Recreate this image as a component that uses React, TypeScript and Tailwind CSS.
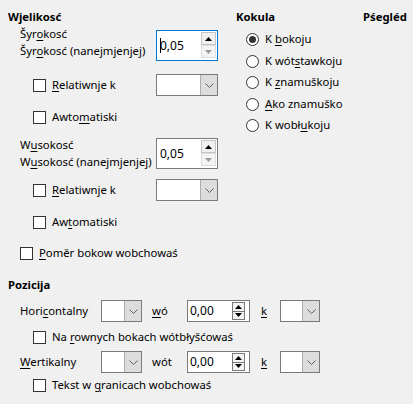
import React from "react";

const U = ({ children }: { children: React.ReactNode }) => (
  <span className="underline underline-offset-[2px] decoration-1">{children}</span>
);

const Check = () => (
  <span className="inline-block w-[13px] h-[13px] border border-[#333333] bg-white shrink-0" />
);

const Radio = ({ sel }: { sel?: boolean }) => (
  <span className="w-[13px] h-[13px] rounded-full border border-[#333333] bg-white flex items-center justify-center shrink-0">
    {sel && <span className="w-[7px] h-[7px] rounded-full bg-[#333333]" />}
  </span>
);

const Chevron = () => (
  <svg width="9" height="5" viewBox="0 0 9 5">
    <polyline points="0.5,0.5 4.5,4.5 8.5,0.5" fill="none" stroke="#606060" strokeWidth="1" />
  </svg>
);

const Drop = ({ w }: { w: string }) => (
  <div className={`flex h-[22px] ${w} border border-[#7a7a7a] bg-white shrink-0`}>
    <div className="flex-1" />
    <div className="w-[17px] bg-[#dcdcdc] border-l border-[#adadad] flex items-center justify-center">
      <Chevron />
    </div>
  </div>
);

const Tri = ({ up, color }: { up?: boolean; color: string }) => (
  <svg width="7" height="4" viewBox="0 0 7 4">
    <polygon points={up ? "0,4 7,4 3.5,0" : "0,0 7,0 3.5,4"} fill={color} />
  </svg>
);

const TallSpin = ({ focus, value }: { focus?: boolean; value: string }) => (
  <div
    className={`relative flex h-[31px] w-[62px] bg-white border ${focus ? "border-[#0078d7]" : "border-[#7a7a7a]"} shrink-0`}
  >
    <div className="flex-1 flex items-center pl-[3px] relative text-[12px]">
      {value}
      {focus && <span className="absolute left-[3px] top-[7px] w-px h-[15px] bg-black" />}
    </div>
    <div className="flex flex-col gap-0 mr-[1px] mt-[1px]">
      <div className="w-[15px] h-[13px] bg-[#f0f0f0] border border-[#c4c4c4] flex items-center justify-center">
        <Tri up color="#000000" />
      </div>
      <div className="w-[15px] h-[13px] bg-[#f4f4f4] border border-[#dddddd] flex items-center justify-center">
        <Tri color="#9a9a9a" />
      </div>
    </div>
  </div>
);

const SmallSpin = ({ value }: { value: string }) => (
  <div className="flex h-[22px] w-[63px] bg-white border border-[#7a7a7a] shrink-0">
    <div className="flex-1 flex items-center pl-[2px] text-[12px]">{value}</div>
    <div className="flex flex-col w-[13px] h-[18px] mt-[1px] mr-[4px] border border-[#7a7a7a] bg-[#f4f4f4]">
      <div className="flex-1 flex items-center justify-center border-b border-[#7a7a7a]">
        <Tri up color="#000000" />
      </div>
      <div className="flex-1 flex items-center justify-center">
        <Tri color="#000000" />
      </div>
    </div>
  </div>
);

const CheckRow = ({ children, pl }: { children: React.ReactNode; pl: string }) => (
  <div className={`flex items-center ${pl}`}>
    <Check />
    <span className="ml-[6px] whitespace-nowrap">{children}</span>
  </div>
);

const RadioRow = ({ children, sel }: { children: React.ReactNode; sel?: boolean }) => (
  <div className="flex items-center h-[21.5px] pl-[10px]">
    <Radio sel={sel} />
    <span className="ml-[6px] whitespace-nowrap">{children}</span>
  </div>
);

export default function App() {
  return (
    <div
      className="w-[413px] h-[404px] bg-[#f0f0f0] text-[11.3px] text-black overflow-hidden"
      style={{ fontFamily: '"Noto Sans", "Open Sans", sans-serif' }}
    >
      <div className="flex pl-2">
        <div className="w-[228px] flex flex-col shrink-0">
          <div className="mt-[9px] h-4 leading-4 font-bold">Wjelikosć</div>
          <div className="flex pl-3">
            <div className="w-[136px] leading-[17px] whitespace-nowrap">
              Šyr<U>o</U>kosć
              <br />
              Šyr<U>o</U>kosć (nanejmjenjej)
            </div>
            <div className="mt-[5px]">
              <TallSpin focus value="0,05" />
            </div>
          </div>
          <div className="flex items-center h-[22px] mt-[13px]">
            <div className="w-[148px]">
              <CheckRow pl="pl-[25px]">
                <U>R</U>elatiwnje k
              </CheckRow>
            </div>
            <Drop w="w-[62px]" />
          </div>
          <div className="flex items-center h-[22px] mt-[10px]">
            <CheckRow pl="pl-[25px]">
              Awto<U>m</U>atiski
            </CheckRow>
          </div>
          <div className="flex pl-3 mt-[8px]">
            <div className="w-[136px] leading-[17px] whitespace-nowrap">
              W<U>u</U>sokosć
              <br />
              W<U>u</U>sokosć (nanejmjenjej)
            </div>
            <div className="mt-[2px]">
              <TallSpin value="0,05" />
            </div>
          </div>
          <div className="flex items-center h-[22px] mt-[9px]">
            <div className="w-[148px]">
              <CheckRow pl="pl-[25px]">
                <U>R</U>elatiwnje k
              </CheckRow>
            </div>
            <Drop w="w-[62px]" />
          </div>
          <div className="flex items-center h-[22px] mt-[10px]">
            <CheckRow pl="pl-[25px]">
              Aw<U>t</U>omatiski
            </CheckRow>
          </div>
          <div className="flex items-center h-[22px] mt-[9px]">
            <CheckRow pl="pl-3">
              <U>P</U>oměr bokow wobchowaś
            </CheckRow>
          </div>
        </div>
        <div className="w-[127px] flex flex-col shrink-0">
          <div className="mt-[9px] h-4 leading-4 font-bold">Kokula</div>
          <div className="mt-[4px] flex flex-col">
            <RadioRow sel>
              K <U>b</U>okoju
            </RadioRow>
            <RadioRow>
              K wót<U>s</U>tawkoju
            </RadioRow>
            <RadioRow>
              K <U>z</U>namuškoju
            </RadioRow>
            <RadioRow>
              <U>A</U>ko znamuško
            </RadioRow>
            <RadioRow>
              K wobł<U>u</U>koju
            </RadioRow>
          </div>
        </div>
        <div className="flex flex-col">
          <div className="mt-[9px] h-4 leading-4 font-bold whitespace-nowrap">Pśegléd</div>
        </div>
      </div>

      <div className="flex flex-col pl-2 mt-[13px]">
        <div className="h-4 leading-4 font-bold">Pozicija</div>
        <div className="flex items-center h-[22px] mt-[7px]">
          <div className="w-[93px] pl-3 whitespace-nowrap">
            Hori<U>c</U>ontalny
          </div>
          <Drop w="w-[41px]" />
          <div className="w-[45px] pl-[10px]">
            <U>w</U>ó
          </div>
          <SmallSpin value="0,00" />
          <div className="w-[30px] pl-[11px]">
            <U>k</U>
          </div>
          <Drop w="w-[40px]" />
        </div>
        <div className="flex items-center h-[22px] mt-[4px]">
          <CheckRow pl="pl-[25px]">
            Na <U>r</U>ownych bokach wótbłyšćowaś
          </CheckRow>
        </div>
        <div className="flex items-center h-[22px] mt-[3px]">
          <div className="w-[93px] pl-3 whitespace-nowrap">
            <U>W</U>ertikalny
          </div>
          <Drop w="w-[41px]" />
          <div className="w-[45px] pl-[10px]">wót</div>
          <SmallSpin value="0,00" />
          <div className="w-[30px] pl-[11px]">
            <U>k</U>
          </div>
          <Drop w="w-[40px]" />
        </div>
        <div className="flex items-center h-[22px] mt-[1px]">
          <CheckRow pl="pl-[25px]">
            Tekst w <U>g</U>ranicach wobchowaś
          </CheckRow>
        </div>
      </div>
    </div>
  );
}
